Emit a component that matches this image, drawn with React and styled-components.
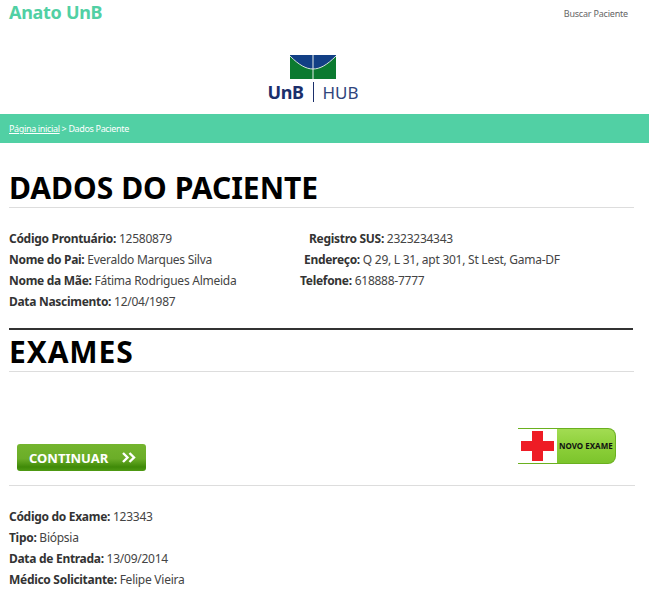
import styled, { createGlobalStyle } from "styled-components";

const GlobalStyle = createGlobalStyle`
  html, body {
    margin: 0;
    padding: 0;
    height: 595px;
    overflow: hidden;
    background: #fff;
  }
  body {
    font-family: "Noto Sans", "Open Sans", sans-serif;
    color: #333;
  }
`;

export default function App() {
  return (
    <Page>
      <GlobalStyle />
      <TopBar>
        <Brand>Anato UnB</Brand>
        <NavLink>Buscar Paciente</NavLink>
      </TopBar>
      <LogoRow>
        <Logo>
          <svg width="46" height="24" viewBox="0 0 46 24">
            <rect width="46" height="24" fill="#0b7a30" />
            <path d="M0 0 H46 V1 C37 10 30 14 23 14 C16 14 9 10 0 1 Z" fill="#123f85" />
            <path d="M0 1 C9 10 16 14 23 14 C30 14 37 10 46 1" fill="none" stroke="#d5e4dc" strokeWidth="1" />
            <path d="M23 0 V24" stroke="#e4ece8" strokeWidth="1" />
          </svg>
          <LogoText>
            <LogoUnb>UnB</LogoUnb>
            <LogoBar />
            <LogoHub>HUB</LogoHub>
          </LogoText>
        </Logo>
      </LogoRow>
      <Breadcrumb>
        <CrumbLink>Página inicial</CrumbLink> &gt; Dados Paciente
      </Breadcrumb>
      <Content>
        <PageTitle>DADOS DO PACIENTE</PageTitle>
        <InfoGrid>
          <InfoLine><b>Código Prontuário:</b> 12580879</InfoLine>
          <InfoLine $indent={18}><b>Registro SUS:</b> 2323234343</InfoLine>
          <InfoLine><b>Nome do Pai:</b> Everaldo Marques Silva</InfoLine>
          <InfoLine $indent={13}><b>Endereço:</b> Q 29, L 31, apt 301, St Lest, Gama-DF</InfoLine>
          <InfoLine><b>Nome da Mãe:</b> Fátima Rodrigues Almeida</InfoLine>
          <InfoLine $indent={9}><b>Telefone:</b> 618888-7777</InfoLine>
          <InfoLine><b>Data Nascimento:</b> 12/04/1987</InfoLine>
        </InfoGrid>
        <DarkRule />
        <SectionTitle>EXAMES</SectionTitle>
        <Actions>
          <ContinueButton>
            CONTINUAR
            <svg width="14" height="11" viewBox="0 0 14 11">
              <path d="M1 1 L5.5 5.5 L1 10 M7.5 1 L12 5.5 L7.5 10" fill="none" stroke="#fff" strokeWidth="2.4" />
            </svg>
          </ContinueButton>
          <NewExamButton>
            <CrossBox>
              <svg width="33" height="30" viewBox="0 0 33 30">
                <path d="M11 0 H22 V10 H33 V20 H22 V30 H11 V20 H0 V10 H11 Z" fill="#ee1c25" />
              </svg>
            </CrossBox>
            <NewExamLabel>NOVO EXAME</NewExamLabel>
          </NewExamButton>
        </Actions>
        <LightRule />
        <ExamList>
          <InfoLine><b>Código do Exame:</b> 123343</InfoLine>
          <InfoLine><b>Tipo:</b> Biópsia</InfoLine>
          <InfoLine><b>Data de Entrada:</b> 13/09/2014</InfoLine>
          <InfoLine><b>Médico Solicitante:</b> Felipe Vieira</InfoLine>
        </ExamList>
      </Content>
    </Page>
  );
}

const Page = styled.div`
  width: 649px;
  height: 595px;
  overflow: hidden;
`;

const TopBar = styled.header`
  display: flex;
  justify-content: space-between;
  height: 50px;
  padding: 0 21px 0 9px;
`;

const Brand = styled.div`
  font-size: 18px;
  line-height: 25px;
  font-weight: 700;
  letter-spacing: -0.3px;
  color: #51d0a4;
`;

const NavLink = styled.a`
  font-size: 9px;
  line-height: 12px;
  margin-top: 8px;
  letter-spacing: -0.2px;
  color: #666;
`;

const LogoRow = styled.div`
  display: flex;
  height: 64px;
  padding-left: 268px;
`;

const Logo = styled.div`
  display: flex;
  flex-direction: column;
  align-items: center;
  width: 90px;
  height: 55px;
  padding-top: 5px;
  box-sizing: border-box;

  svg {
    display: block;
  }
`;

const LogoText = styled.div`
  display: flex;
  align-items: center;
  height: 26px;
  color: #1b2f6b;
`;

const LogoUnb = styled.span`
  font-size: 18px;
  font-weight: 700;
  letter-spacing: -0.4px;
`;

const LogoBar = styled.span`
  width: 1px;
  height: 20px;
  margin: 0 9px;
  background: #1b2f6b;
`;

const LogoHub = styled.span`
  font-size: 17px;
  color: #30457c;
`;

const Breadcrumb = styled.nav`
  height: 29px;
  padding-left: 9px;
  background: #51d0a4;
  font-size: 9px;
  line-height: 29px;
  letter-spacing: -0.35px;
  color: #fff;
`;

const CrumbLink = styled.a`
  color: #fff;
  text-decoration: underline;
`;

const Content = styled.main`
  padding: 0 15px 0 9px;
`;

const PageTitle = styled.h1`
  margin: 27px 0 0;
  padding-bottom: 2px;
  border-bottom: 1px solid #ddd;
  font-size: 30px;
  line-height: 35px;
  font-weight: 700;
  color: #000;
`;

const InfoGrid = styled.section`
  display: grid;
  grid-template-columns: 282px 1fr;
  margin-top: 20px;
`;

const InfoLine = styled.div`
  font-size: 12px;
  line-height: 21px;
  letter-spacing: -0.25px;
  padding-left: ${(p) => p.$indent || 0}px;
  white-space: nowrap;
  color: #444;

  b {
    letter-spacing: -0.3px;
    color: #333;
  }
`;

const DarkRule = styled.hr`
  margin: 16px 1px 0 0;
  border: 0;
  border-top: 2px solid #333;
`;

const SectionTitle = styled.h2`
  margin: 4px 0 0;
  padding-bottom: 2px;
  border-bottom: 1px solid #ddd;
  font-size: 30px;
  line-height: 35px;
  font-weight: 700;
  letter-spacing: 0.9px;
  color: #000;
`;

const Actions = styled.div`
  display: flex;
  justify-content: space-between;
  align-items: flex-end;
  height: 113px;
  padding: 0 18px 14px 8px;
  box-sizing: border-box;
`;

const ContinueButton = styled.div`
  display: flex;
  align-items: center;
  justify-content: space-between;
  width: 129px;
  height: 27px;
  padding: 0 10px 0 12px;
  box-sizing: border-box;
  border-radius: 3px;
  background: linear-gradient(#74b52e 0%, #6bad28 55%, #3f8a08 85%, #4f9a14 100%);
  font-size: 13px;
  font-weight: 700;
  color: #fff;
`;

const NewExamButton = styled.div`
  display: flex;
  align-self: flex-start;
  margin-top: 56px;
  width: 98px;
  height: 36px;
  border-radius: 0 8px 8px 0;
  overflow: hidden;
  background: linear-gradient(#a2dc52, #8dd03a 50%, #7cc42c);
  border: 1px solid #6ab01f;
  border-left: 0;
  box-sizing: border-box;
`;

const CrossBox = styled.div`
  display: flex;
  align-items: center;
  justify-content: center;
  width: 39px;
  background: #fff;

  svg {
    display: block;
  }
`;

const NewExamLabel = styled.div`
  flex: 1;
  padding-left: 2px;
  font-size: 8px;
  line-height: 34px;
  font-weight: 700;
  white-space: nowrap;
  color: #111;
`;

const LightRule = styled.hr`
  margin: 0 -1px 0 0;
  border: 0;
  border-top: 1px solid #ddd;
`;

const ExamList = styled.section`
  margin-top: 20px;
`;
